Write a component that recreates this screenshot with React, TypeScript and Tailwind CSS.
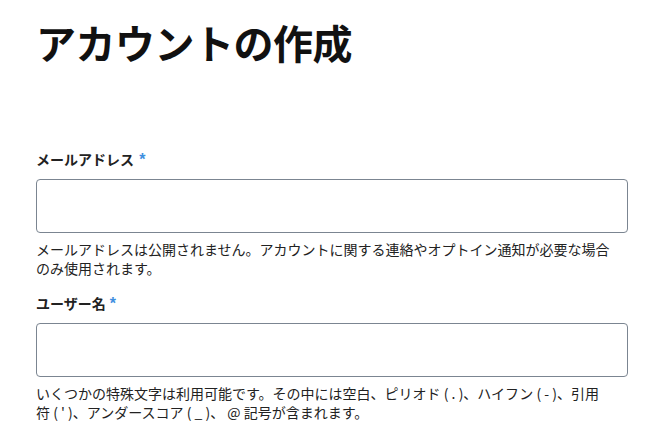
import React from "react";

export default function App() {
  return (
    <div className="w-[667px] h-[434px] overflow-hidden bg-white px-9 font-['Noto_Sans_CJK_JP','Noto_Sans',sans-serif] text-[#222]">
      <h1 className="pt-[18px] text-[40px] leading-[48px] font-bold text-[#111] tracking-[-0.5px]">
        アカウントの作成
      </h1>

      <div className="mt-[83px]">
        <label className="block text-[14px] leading-[20px] font-bold text-[#222]">
          メールアドレス <span className="ml-[2px] font-['Liberation_Sans',sans-serif] text-[16px] font-bold leading-[14px] text-[#3f8fdf]">*</span>
        </label>
        <div className="mt-[10px] h-[54px] w-[592px] rounded-[4px] border border-[#7b8591] bg-white" />
        <p className="mt-[7px] w-[580px] text-[14px] leading-[19px] text-[#222]">
          メールアドレスは公開されません。アカウントに関する連絡やオプトイン通知が必要な場合のみ使用されます。
        </p>
      </div>

      <div className="mt-[15px]">
        <label className="block text-[14px] leading-[20px] font-bold text-[#222]">
          ユーザー名<span className="ml-[4px] font-['Liberation_Sans',sans-serif] text-[16px] font-bold leading-[14px] text-[#3f8fdf]">*</span>
        </label>
        <div className="mt-[10px] h-[54px] w-[592px] rounded-[4px] border border-[#7b8591] bg-white" />
        <p className="mt-[7px] w-[572px] text-[14px] leading-[19px] text-[#222]">
          いくつかの特殊文字は利用可能です。その中には空白、ピリオド ( . )、ハイフン ( - )、引用符 ( ' )、アンダースコア ( _ )、 @ 記号が含まれます。
        </p>
      </div>
    </div>
  );
}
